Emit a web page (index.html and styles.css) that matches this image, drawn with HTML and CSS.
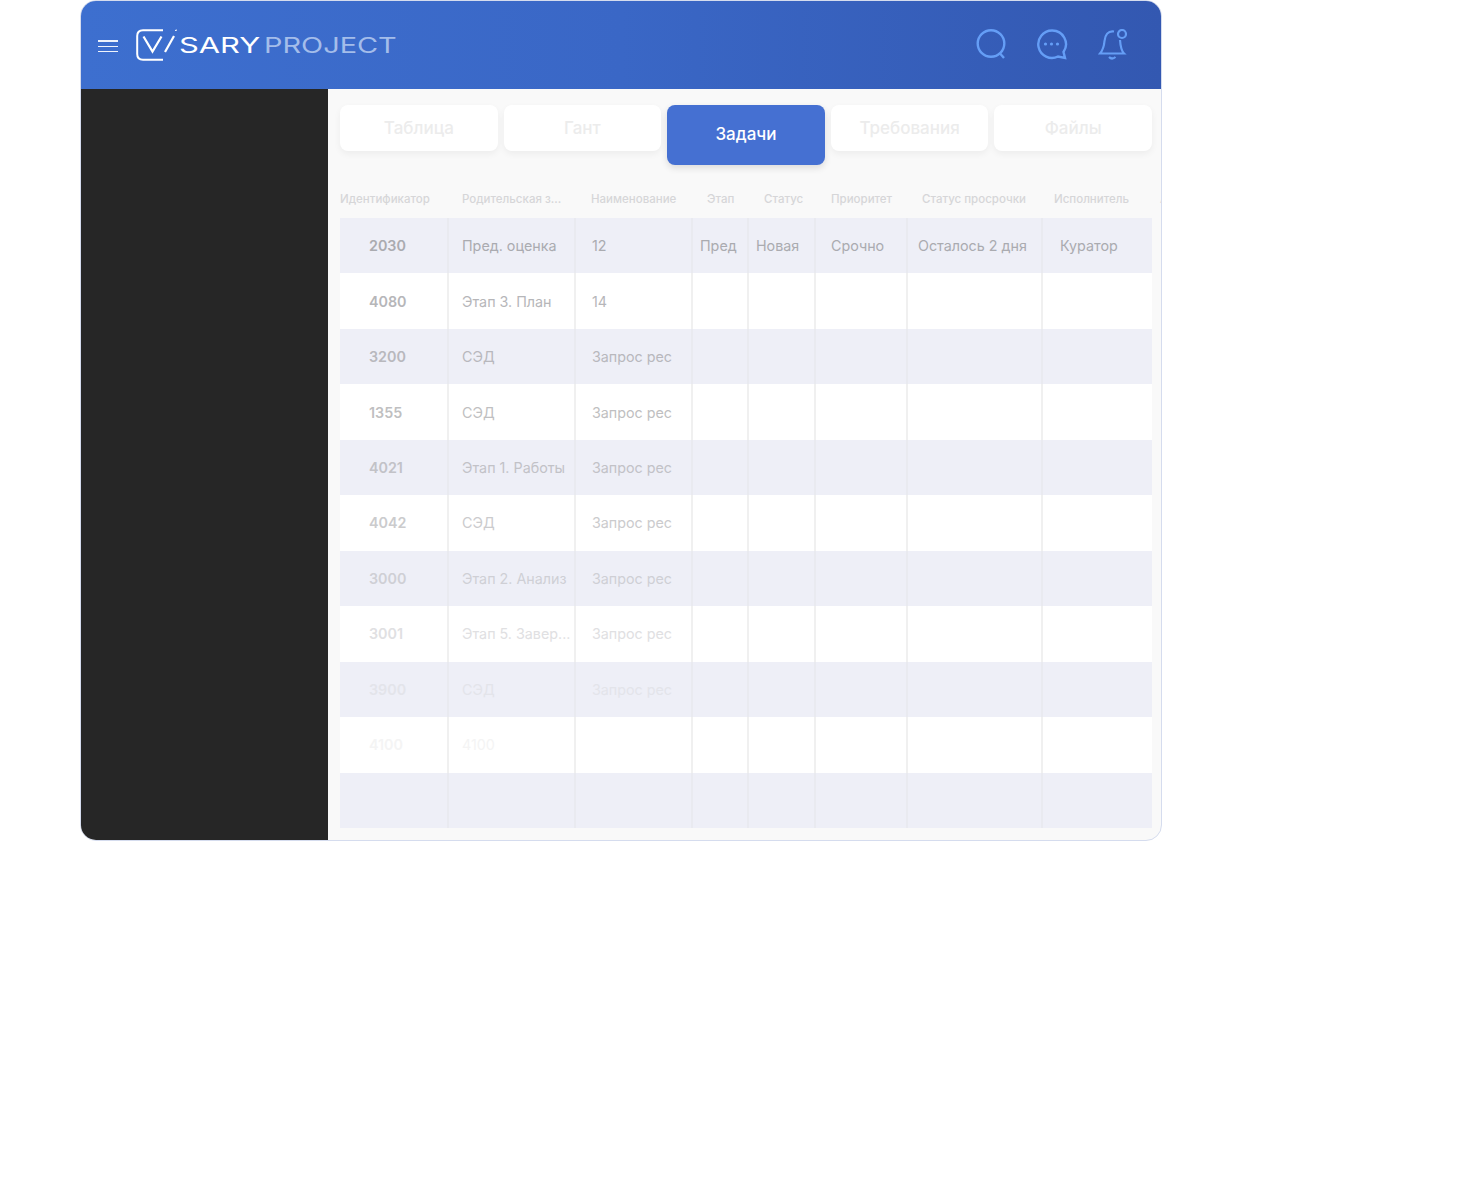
FILE: index.html
```html
<!DOCTYPE html>
<html lang="ru">
<head>
<meta charset="utf-8">
<title>Visary Project</title>
<link rel="stylesheet" href="styles.css">
</head>
<body>
<div class="window">
  <header class="topbar">
    <div class="burger"><span></span><span></span><span></span></div>
    <svg class="logo-mark" width="42" height="32" viewBox="0 0 42 32" fill="none" stroke="#fff">
      <path d="M27 1.2H7Q1.2 1.2 1.2 7V25Q1.2 30.8 7 30.8H27" stroke-width="2"/>
      <path d="M7.5 7.5L16.5 22.5L25.5 7.5" stroke-width="2.2"/>
      <path d="M38 7L29 23" stroke-width="2.2"/>
      <path d="M39 1.5L41 1" stroke-width="1"/>
    </svg>
    <span class="logo-word logo-sary">SARY</span>
    <span class="logo-word logo-project">PROJECT</span>
    <div class="actions">
      <svg width="30" height="31" viewBox="0 0 30 31" fill="none" stroke="#659ef6" stroke-width="2.4">
        <circle cx="15" cy="14.500" r="13.300"/>
        <path d="M24 24.500L28 29"/>
      </svg>
      <svg width="32" height="31" viewBox="0 0 32 31" fill="none" stroke="#659ef6" stroke-width="2.4">
        <path d="M16 1.5A13.7 13.7 0 1 0 22 27.500L29 29L27.500 23A13.7 13.7 0 0 0 16 1.500Z"/>
        <circle cx="9.500" cy="15" r="1.600" fill="#659ef6" stroke="none"/>
        <circle cx="15.500" cy="15" r="1.600" fill="#659ef6" stroke="none"/>
        <circle cx="21.500" cy="15" r="1.600" fill="#659ef6" stroke="none"/>
      </svg>
      <svg width="30" height="32" viewBox="0 0 30 32" fill="none" stroke="#659ef6" stroke-width="2.2">
        <path d="M16 2.500C10 1.500 7 6 6.500 12C6 18 5 21 2 24.500H26C23.500 22 22.500 18 22 11"/>
        <circle cx="24" cy="5" r="4"/>
        <path d="M11 28Q14 31 17.500 28"/>
      </svg>
    </div>
  </header>
  <div class="body">
    <aside class="sidebar"></aside>
    <main class="main">
      <nav class="tabs">
        <div class="tab">Таблица</div>
        <div class="tab">Гант</div>
        <div class="tab tab-active">Задачи</div>
        <div class="tab">Требования</div>
        <div class="tab">Файлы</div>
      </nav>
      <div class="head">
        <span>Идентификатор</span><span>Родительская з...</span><span>Наименование</span><span>Этап</span><span>Статус</span><span>Приоритет</span><span>Статус просрочки</span><span>Исполнитель</span><span>Автор</span>
      </div>
      <div class="rows">
        <div class="row r1"><b>2030</b><span>Пред. оценка</span><span>12</span><span>Пред</span><span>Новая</span><span>Срочно</span><span>Осталось 2 дня</span><span>Куратор</span></div>
        <div class="row r2"><b>4080</b><span>Этап 3. План</span><span>14</span><span></span><span></span><span></span><span></span><span></span></div>
        <div class="row r3"><b>3200</b><span>СЭД</span><span>Запрос рес</span><span></span><span></span><span></span><span></span><span></span></div>
        <div class="row r4"><b>1355</b><span>СЭД</span><span>Запрос рес</span><span></span><span></span><span></span><span></span><span></span></div>
        <div class="row r5"><b>4021</b><span>Этап 1. Работы</span><span>Запрос рес</span><span></span><span></span><span></span><span></span><span></span></div>
        <div class="row r6"><b>4042</b><span>СЭД</span><span>Запрос рес</span><span></span><span></span><span></span><span></span><span></span></div>
        <div class="row r7"><b>3000</b><span>Этап 2. Анализ</span><span>Запрос рес</span><span></span><span></span><span></span><span></span><span></span></div>
        <div class="row r8"><b>3001</b><span>Этап 5. Завер...</span><span>Запрос рес</span><span></span><span></span><span></span><span></span><span></span></div>
        <div class="row r9"><b>3900</b><span>СЭД</span><span>Запрос рес</span><span></span><span></span><span></span><span></span><span></span></div>
        <div class="row r10"><b>4100</b><span>4100</span><span></span><span></span><span></span><span></span><span></span><span></span></div>
        <div class="row r11"><b></b><span></span><span></span><span></span><span></span><span></span><span></span><span></span></div>
      </div>
    </main>
  </div>
</div>
</body>
</html>
```
FILE: styles.css
```css
* { box-sizing: border-box; }
html, body { margin: 0; padding: 0; background: #fff; }
body { padding-left: 80px; height: 1181px; font-family: Inter, "Open Sans", sans-serif; }
.window {
  width: 1082px; height: 841px;
  border: 1px solid #d5dcee; border-radius: 16px; overflow: hidden;
  display: flex; flex-direction: column; background: #f9f9f9;
}
.topbar {
  height: 87.500px; flex: none; display: flex; align-items: center;
  padding: 0 33px 0 17px;
  background: linear-gradient(90deg, #3d6fcf 0%, #3a67c6 50%, #3358b1 100%);
}
.burger { width: 20px; display: flex; flex-direction: column; gap: 4px; margin-top: 3px; }
.burger span { display: block; height: 1.300px; background: #eef3fc; }
.logo-mark { margin-left: 18px; margin-top: 1px; flex: none; }
.logo-word {
  display: inline-block; font-family: Inter, sans-serif; font-weight: 300;
  font-size: 21px; line-height: 22px; transform-origin: left center; margin-top: 2px;
}
.logo-sary { color: #fff; width: 84px; margin-left: 1px; transform: scaleX(1.47); font-weight: 400; }
.logo-project { color: #a4bdea; transform: scaleX(1.376); margin-left: 1px; font-weight: 400; }
.actions { margin-left: auto; display: flex; align-items: center; gap: 30px; }
.actions svg { display: block; }
.body { flex: 1; display: flex; min-height: 0; }
.sidebar { width: 247px; flex: none; background: #262626; }
.main { flex: 1; min-width: 0; padding: 16.500px 9px 0 12px; overflow: hidden; }
.tabs { display: flex; gap: 6px; height: 60px; align-items: flex-start; }
.tab {
  width: 157.600px; height: 46px; border-radius: 8px; background: #fff;
  box-shadow: 0 3px 7px rgba(0, 0, 0, .05);
  display: flex; align-items: center; justify-content: center;
  font-size: 17px; font-weight: 500; color: #ececec;
}
.tab-active {
  height: 60px; background: #4570d2; color: #fff; padding-bottom: 2px;
  box-shadow: 0 3px 7px rgba(0, 0, 0, .12);
}
.head, .row { display: grid; grid-template-columns: 109px 127px 117px 56px 67px 92px 135px 109px; }
.head { grid-template-columns: 122px 129px 116px 57px 67px 91px 132px 106px 60px; height: 53px; width: 880px; align-items: center; padding-top: 14px; font-size: 11.500px; font-weight: 500; color: #d6d6d8; white-space: nowrap; }
.rows { display: flex; flex-direction: column; height: 610px; }
.row { flex: 1; background: #fff; font-size: 14.300px; --line: #f0f0f0; }
.row:nth-child(odd) { background: #eeeff7; --line: #e9eaf0; }
.row > * { display: flex; align-items: center; border-right: 2px solid var(--line); font-weight: 400; color: var(--ink); white-space: nowrap; overflow: hidden; }
.row > b { font-weight: 600; padding-left: 29px; }
.row > :nth-child(2) { padding-left: 13px; }
.row > :nth-child(3) { padding-left: 16px; }
.row > :nth-child(4) { padding-left: 7px; }
.row > :nth-child(5) { padding-left: 7px; }
.row > :nth-child(6) { padding-left: 15px; }
.row > :nth-child(7) { padding-left: 10px; }
.row > :nth-child(8) { padding-left: 17px; border-right: 0; }
.r1 { --ink: #aaabb0; }
.r2 { --ink: #b6b6b9; }
.r3 { --ink: #b8b8bd; }
.r4 { --ink: #bfbfc1; }
.r5 { --ink: #c2c2c7; }
.r6 { --ink: #cbcbcd; }
.r7 { --ink: #cfcfd5; }
.r8 { --ink: #e0e0e2; }
.r9 { --ink: #e3e4ea; }
.r10 { --ink: #f4f4f4; }
.r11 { --ink: #eeeff7; }
```
